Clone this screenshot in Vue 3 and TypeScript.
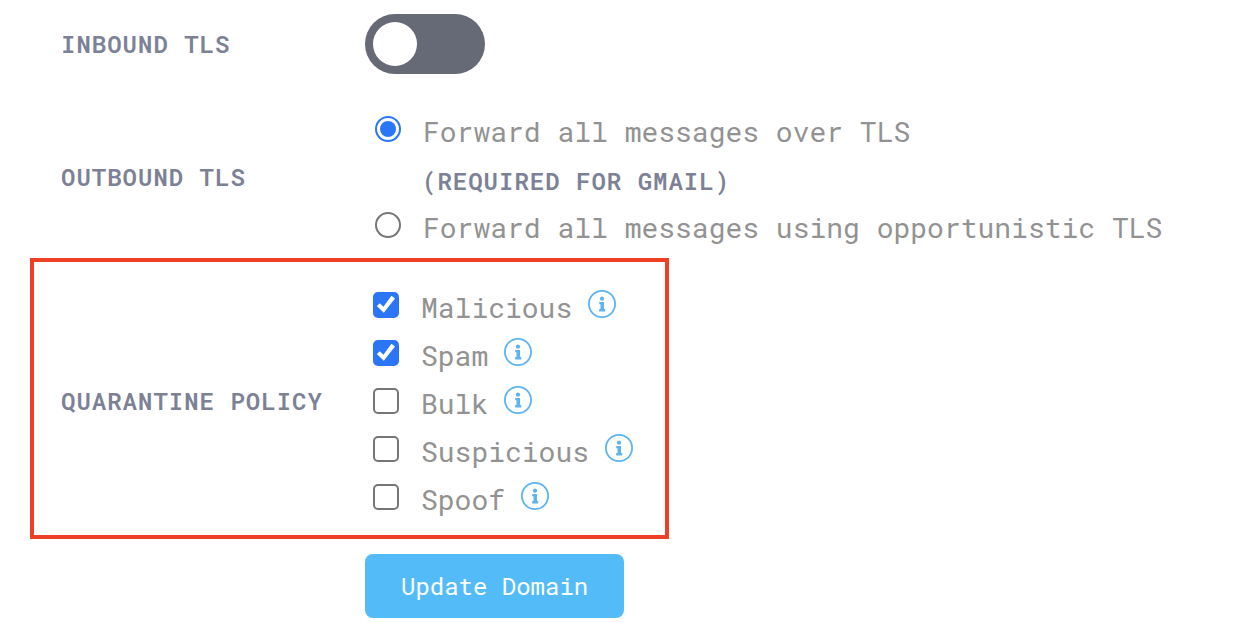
<script setup lang="ts">
import { ref } from 'vue'

interface Policy {
  id: string
  name: string
  hint: string
  checked: boolean
}

const inboundTls = ref(false)
const outboundTls = ref<'required' | 'opportunistic'>('required')
const policies = ref<Policy[]>([
  { id: 'malicious', name: 'Malicious', hint: 'About malicious', checked: true },
  { id: 'spam', name: 'Spam', hint: 'About spam', checked: true },
  { id: 'bulk', name: 'Bulk', hint: 'About bulk', checked: false },
  { id: 'suspicious', name: 'Suspicious', hint: 'About suspicious', checked: false },
  { id: 'spoof', name: 'Spoof', hint: 'About spoof', checked: false },
])
</script>

<template>
  <form class="settings" @submit.prevent>
    <div class="row">
      <label class="heading" for="inbound">INBOUND TLS</label>
      <input id="inbound" v-model="inboundTls" class="toggle" type="checkbox" role="switch" />
    </div>

    <div class="row outbound" role="radiogroup" aria-labelledby="outbound-heading">
      <span id="outbound-heading" class="heading">OUTBOUND TLS</span>
      <div class="options radios">
        <div class="option">
          <input id="tls-required" v-model="outboundTls" class="radio" type="radio" name="outbound" value="required" />
          <label class="text" for="tls-required">Forward all messages over TLS</label>
        </div>
        <div class="note">(REQUIRED FOR GMAIL)</div>
        <div class="option">
          <input id="tls-opportunistic" v-model="outboundTls" class="radio" type="radio" name="outbound" value="opportunistic" />
          <label class="text" for="tls-opportunistic">Forward all messages using opportunistic TLS</label>
        </div>
      </div>
    </div>

    <div class="row quarantine" role="group" aria-labelledby="quarantine-heading">
      <span id="quarantine-heading" class="heading">QUARANTINE POLICY</span>
      <div class="options">
        <div v-for="policy in policies" :key="policy.id" class="option">
          <input :id="policy.id" v-model="policy.checked" class="check" type="checkbox" />
          <label class="text" :for="policy.id">{{ policy.name }}</label>
          <button class="info" type="button" :aria-label="policy.hint">
            <svg viewBox="0 0 28 28" width="28" height="28" aria-hidden="true">
              <circle cx="14" cy="14" r="13.1" fill="none" stroke="currentColor" stroke-width="1.8" />
              <circle cx="14" cy="8.7" r="2.1" fill="currentColor" />
              <path d="M11.2 12h4.8v7.100h1.200v2.300h-6v-2.300h1.300v-4.800h-1.300z" fill="currentColor" />
            </svg>
          </button>
        </div>
      </div>
    </div>

    <button class="submit" type="submit">Update Domain</button>
  </form>
</template>

<style>
body {
  margin: 0;
  background: #fff;
}
</style>

<style scoped>
.settings {
  box-sizing: border-box;
  padding: 14px 30px 4px;
  font-family: "Roboto Mono", "DejaVu Sans Mono", monospace;
  font-size: 28px;
  color: #929292;
}

.row {
  display: flex;
  align-items: center;
  padding-left: 31px;
}

.heading,
.note {
  font-size: 24px;
  font-weight: 600;
  letter-spacing: 1px;
  color: #7c8196;
  white-space: nowrap;
}

.heading {
  flex: none;
  width: 304px;
}

.toggle {
  appearance: none;
  display: flex;
  align-items: center;
  box-sizing: border-box;
  width: 120px;
  height: 60px;
  margin: 0;
  padding: 8px;
  border-radius: 30px;
  background: #666a76;
  cursor: pointer;
}

.toggle::before {
  content: "";
  width: 44px;
  height: 44px;
  border-radius: 50%;
  background: #fff;
}

.toggle:checked {
  justify-content: flex-end;
  background: #2a76f7;
}

.outbound {
  margin-top: 31px;
}

.options {
  padding-left: 8px;
}

.radios {
  padding-left: 10px;
}

.option {
  display: flex;
  align-items: center;
  height: 48px;
}

.text {
  padding-top: 6px;
  margin-left: 22px;
  line-height: 36px;
  white-space: nowrap;
}

.note {
  padding: 8px 0 0 47px;
  line-height: 40px;
}

.radio,
.check {
  appearance: none;
  display: grid;
  place-content: center;
  flex: none;
  box-sizing: border-box;
  width: 26px;
  height: 26px;
  margin: 0;
  border: 2px solid #767676;
  background: #fff;
}

.radio {
  border-radius: 50%;
}

.radio:checked {
  border-color: #2a76f7;
}

.radio:checked::before {
  content: "";
  width: 16px;
  height: 16px;
  border-radius: 50%;
  background: #2a76f7;
}

.check {
  border-radius: 5px;
}

.check:checked {
  border-color: #2a76f7;
  background: #2a76f7;
}

.check:checked::before {
  content: "";
  width: 20px;
  height: 20px;
  background: #fff;
  clip-path: polygon(4% 55%, 19% 41%, 37% 59%, 77% 4%, 95% 18%, 39% 89%);
}

.info {
  display: flex;
  margin: 0 0 0 16px;
  padding: 0 0 2px;
  border: 0;
  background: none;
  color: #5db4f2;
}

.quarantine {
  box-sizing: border-box;
  width: fit-content;
  margin-top: 9px;
  padding: 19px 32px 14px 27px;
  border: 4px solid #ee4027;
}

.submit {
  display: block;
  height: 64px;
  margin: 15px 0 0 335px;
  padding: 0 36px;
  border: 0;
  border-radius: 8px;
  background: #53bcf8;
  color: #fff;
  font-family: inherit;
  font-size: 24px;
}
</style>
